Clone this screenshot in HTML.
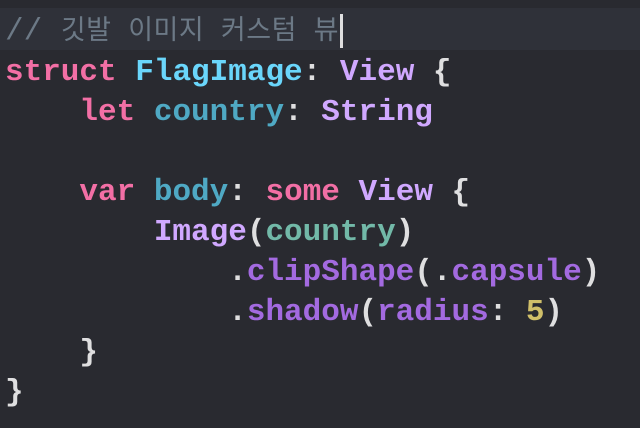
<!DOCTYPE html>
<html><head><style>
html,body{margin:0;padding:0;background:#292a30;width:640px;height:428px;overflow:hidden}
pre{margin:0;position:absolute;left:5px;top:12px;font-family:"Liberation Mono","Noto Sans CJK KR",monospace;font-size:31px;line-height:40px;color:#dfdfe0;font-weight:bold}
.hl{position:absolute;left:0;top:8px;width:640px;height:42px;background:#2f3139}
.k{color:#f26fa5}.t{color:#6ad6fb}.v{color:#d0a8ff}.p{color:#4fa9c4}.pa{color:#72b9a8}.m{color:#a36ae0}.n{color:#d0bf69}
.c{color:#6c7986;font-weight:normal}
.ko{font-size:27px;letter-spacing:0.5px}
.cur{display:inline-block;width:3px;height:34px;background:#dfdfe0;vertical-align:middle;margin-left:1px}
</style></head><body>
<div class="hl"></div>
<pre><span class="c">// <span class="ko">깃발 이미지 커스텀 뷰</span></span><span class="cur"></span>
<span class="k">struct</span> <span class="t">FlagImage</span>: <span class="v">View</span> {
    <span class="k">let</span> <span class="p">country</span>: <span class="v">String</span>

    <span class="k">var</span> <span class="p">body</span>: <span class="k">some</span> <span class="v">View</span> {
        <span class="v">Image</span>(<span class="pa">country</span>)
            .<span class="m">clipShape</span>(.<span class="m">capsule</span>)
            .<span class="m">shadow</span>(<span class="m">radius</span>: <span class="n">5</span>)
    }
}</pre>
</body></html>
